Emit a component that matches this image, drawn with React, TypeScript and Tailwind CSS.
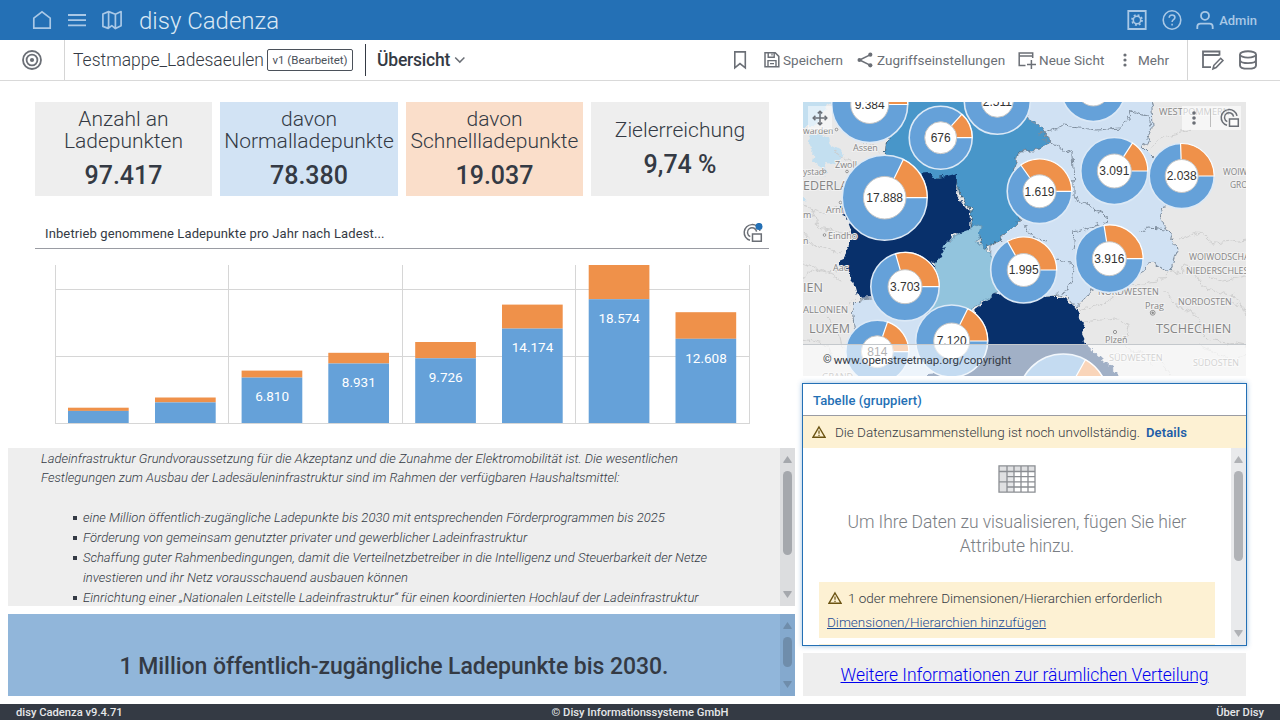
import type { ReactNode } from "react";

const BLUE = "#65a1d9";
const ORANGE = "#ef914a";

function HeaderIcons() {
  return (
    <div className="flex items-center text-[#a9c8e6]">
      <svg className="ml-8 h-5 w-5" viewBox="0 0 20 20" fill="none" stroke="currentColor" strokeWidth="1.7">
        <path d="M1.8 8.2 10 1.9l8.2 6.3v10H1.8z" />
      </svg>
      <svg className="ml-[15px] h-5 w-5" viewBox="0 0 20 20" fill="none" stroke="currentColor" strokeWidth="1.8">
        <path d="M1 5h18M1 10.2h18M1 15.4h18" />
      </svg>
      <svg className="ml-[15px] h-5 w-5" viewBox="0 0 20 20" fill="none" stroke="currentColor" strokeWidth="1.7" strokeLinejoin="round">
        <path d="M.9 4 6.6 1.6l6.8 2.6 5.7-2.6v14.2l-5.7 2.8L9.8 15.6 6.2 18.4.9 16.4zM6.6 1.8v13.6l-.4 3M13.4 4.2v14.2" />
      </svg>
      <span className="ml-[17px] pt-[2px] text-[24px] leading-none font-light text-[#dbe8f4]">disy Cadenza</span>
    </div>
  );
}

function Header() {
  return (
    <header className="flex h-10 shrink-0 items-center justify-between bg-[#2470b5] pr-[23px]">
      <HeaderIcons />
      <div className="flex items-center text-[#a9c8e6]">
        <svg className="h-5 w-5" viewBox="0 0 20 20" fill="none" stroke="currentColor" strokeWidth="1.8">
          <path d="M1.3 1h17.4v18H1.3z" />
          <circle cx="10" cy="10" r="3.7" strokeWidth="1.6" />
          <circle cx="10" cy="10" r="5" strokeWidth="1.8" strokeDasharray="1.9 2.03" />
        </svg>
        <svg className="ml-[15px] h-5 w-5" viewBox="0 0 20 20" fill="none" stroke="currentColor" strokeWidth="1.6">
          <ellipse cx="10" cy="10" rx="8.8" ry="9.2" />
          <path d="M7.2 7.8c0-3.8 5.7-3.4 5.7-.3 0 2.2-2.8 2.2-2.8 4.4M10.1 13.7v1.8" />
        </svg>
        <svg className="ml-[13px] h-5 w-5" viewBox="0 0 20 20" fill="none" stroke="currentColor" strokeWidth="1.8">
          <circle cx="10" cy="5.8" r="4" />
          <path d="M2.3 19v-2.2c0-2 1.3-3.1 3.2-3.1h9c1.9 0 3.2 1.1 3.2 3.1V19" />
        </svg>
        <span className="ml-[4px] pt-px text-[13px] font-medium">Admin</span>
      </div>
    </header>
  );
}

function Tool({ icon, label, className }: { icon: ReactNode; label: string; className: string }) {
  return (
    <div className={`flex items-center ${className}`}>
      {icon}
      <span className="text-[13.5px] tracking-[0.04px] whitespace-nowrap">{label}</span>
    </div>
  );
}

function Toolbar() {
  return (
    <div className="flex h-[41px] shrink-0 items-center border-b border-[#d9d9d9] bg-white text-[#6b6f76]">
      <div className="flex h-full w-[65px] items-center justify-center border-r border-[#d5d5d5]">
        <svg className="h-5 w-5" viewBox="0 0 20 20" fill="none" stroke="currentColor" strokeWidth="1.8">
          <circle cx="10" cy="10" r="9" />
          <circle cx="10" cy="10" r="5.4" />
          <circle cx="10" cy="10" r="2.1" fill="currentColor" stroke="none" />
        </svg>
      </div>
      <span className="ml-2 w-[190px] pt-px text-[17.5px] font-light text-[#343a44]">Testmappe_Ladesaeulen</span>
      <span className="ml-1 flex h-[22px] w-[86px] items-center justify-center rounded-[2px] border border-[#4b515a] pt-px text-[11.5px] font-[450] whitespace-nowrap text-[#4b515a]">
        v1 (Bearbeitet)
      </span>
      <div className="ml-3 h-8 w-px bg-[#343a44]" />
      <span className="ml-[11px] w-[74px] text-[17.5px] font-medium tracking-[-0.2px] text-[#343a44]">Übersicht</span>
      <svg className="ml-[3px] h-3 w-3" viewBox="0 0 12 12" fill="none" stroke="currentColor" strokeWidth="1.5">
        <path d="m1.2 3.5 4.6 4.6 4.6-4.6" />
      </svg>
      <div className="ml-auto flex h-full items-center">
        <svg className="h-5 w-5" viewBox="0 0 20 20" fill="none" stroke="currentColor" strokeWidth="1.6">
          <path d="M4.8 1.9h10.5v16L10 13.6l-5.2 4.3z" />
        </svg>
        <Tool
          className="ml-[13px] w-[81px]"
          label="Speichern"
          icon={
            <svg className="mr-[2px] h-[18px] w-[18px] shrink-0" viewBox="0 0 18 18" fill="none" stroke="currentColor" strokeWidth="1.5">
              <path d="M2 1.8h10.2L15.8 5.4V15.8H2z" />
              <path d="M5 15.6V9.6h8v6M5.2 2v4.2h6V2" strokeWidth="1.4" />
              <path d="M9 2.4v2.2M7 12.6h4" strokeWidth="1.2" />
            </svg>
          }
        />
        <Tool
          className="ml-[13px] w-[149px]"
          label="Zugriffseinstellungen"
          icon={
            <svg className="mr-1 h-4 w-4 shrink-0" viewBox="0 0 16 16" fill="none" stroke="currentColor" strokeWidth="1.6">
              <path d="M13.5 2.6 2.6 8l10.9 5.4" />
              <circle cx="13.3" cy="2.7" r="2.1" fill="currentColor" stroke="none" />
              <circle cx="2.4" cy="8" r="1.9" fill="currentColor" stroke="none" />
              <circle cx="13.3" cy="13.3" r="2.1" fill="currentColor" stroke="none" />
            </svg>
          }
        />
        <Tool
          className="ml-3 w-[86px]"
          label="Neue Sicht"
          icon={
            <svg className="mr-[3px] h-[18px] w-[18px] shrink-0" viewBox="0 0 18 18" fill="none" stroke="currentColor" strokeWidth="1.5">
              <path d="M14.7 7V2H1.2v12.6h6.3M1.2 5h13.5M13.4 9v9M9 13.4h9" />
            </svg>
          }
        />
        <Tool
          className="ml-[15px] w-[51px]"
          label="Mehr"
          icon={
            <svg className="mr-[6px] h-4 w-[13px] shrink-0" viewBox="0 0 13 16" fill="currentColor">
              <circle cx="6" cy="3" r="1.6" />
              <circle cx="6" cy="8" r="1.6" />
              <circle cx="6" cy="13" r="1.6" />
            </svg>
          }
        />
        <div className="ml-[17px] h-full w-px bg-[#d5d5d5]" />
        <svg className="ml-[13px] h-[22px] w-6" viewBox="0 0 24 22" fill="none" stroke="currentColor" strokeWidth="1.8">
          <path d="M18.5 6.5v-4H2v15.6h8M2 6h16.5" />
          <path d="m12 19.8.9-3.5 6.8-7 2.2 2.2-6.8 7z" strokeWidth="1.6" />
        </svg>
        <svg className="mr-[22px] ml-[13px] h-5 w-5" viewBox="0 0 20 20" fill="none" stroke="currentColor" strokeWidth="1.9">
          <ellipse cx="10" cy="4.4" rx="8" ry="3.2" />
          <path d="M2 4.4v11c0 4.3 16 4.3 16 0v-11M2 10c0 4.2 16 4.2 16 0" />
        </svg>
      </div>
    </div>
  );
}

function Kpi({ title, value, className }: { title: string[]; value: string; className: string }) {
  return (
    <div className={`flex h-[94px] flex-col items-center justify-center pt-[3px] text-[#343a44] ${className}`}>
      {title.map((line) => (
        <span key={line} className="text-[21px] leading-[22px] font-light whitespace-nowrap">
          {line}
        </span>
      ))}
      <span className="mt-[7px] text-[25px] leading-[34px] font-[550]">{value}</span>
    </div>
  );
}

const bars = [
  { x: 68, top: 407.7, mid: 410.9 },
  { x: 155, top: 397.5, mid: 402.4 },
  { x: 241.6, top: 370.6, mid: 377.6, label: "6.810", ly: 401 },
  { x: 328.3, top: 352.8, mid: 363.5, label: "8.931", ly: 387 },
  { x: 415.2, top: 342, mid: 358.3, label: "9.726", ly: 382 },
  { x: 502, top: 304.6, mid: 328.6, label: "14.174", ly: 352 },
  { x: 588.7, top: 265, mid: 299.2, label: "18.574", ly: 323 },
  { x: 675.5, top: 312.2, mid: 338.8, label: "12.608", ly: 363 },
];

function BarChart() {
  return (
    <svg className="block h-[175px] w-full" viewBox="35 249 734 175">
      <g stroke="#d6d6d6" shapeRendering="crispEdges">
        <path d="M55.5 265v159M228.5 265v159M402.5 265v159M575.5 265v159M749.5 265v159M55 289.5h695M55 356.5h695M55 423.5h695" />
      </g>
      {bars.map((b) => (
        <g key={b.x}>
          <rect x={b.x} y={b.top} width="60.7" height={b.mid - b.top} fill={ORANGE} />
          <rect x={b.x} y={b.mid} width="60.7" height={423 - b.mid} fill={BLUE} />
          {b.label && (
            <text x={b.x + 30.5} y={b.ly} textAnchor="middle" fill="#fff" className="text-[13.5px] font-[450]">
              {b.label}
            </text>
          )}
        </g>
      ))}
    </svg>
  );
}

function LinkedViewIcon({ dot }: { dot?: boolean }) {
  return (
    <svg className="h-5 w-5" viewBox="0 0 20 20" fill="none" stroke="#6b6f76" strokeWidth="1.5">
      <path d="M7 17.3A8 8 0 1 1 17 7.8" />
      <path d="M7.3 13.6A4.6 4.6 0 1 1 13.6 8.6" />
      <path d="M9.5 11h8.8v7.2H9.5z" fill="#ffffff" fillOpacity="0.7" />
      {dot && <circle cx="16" cy="3.4" r="3.5" fill="#2470b5" stroke="none" />}
    </svg>
  );
}

function Scrollbar({ track, thumb, arrow }: { track: string; thumb: string; arrow: string }) {
  return (
    <div className={`flex w-[15px] shrink-0 flex-col items-center pt-2 pb-2 ${track}`}>
      <svg className={`h-[7px] w-[9px] shrink-0 ${arrow}`} viewBox="0 0 9 7" fill="currentColor">
        <path d="M4.5 0 9 6.4 8 7H1L0 6.4z" />
      </svg>
      <div className={`mt-2 w-[9px] rounded-full ${thumb}`} />
      <svg className={`mt-auto h-[7px] w-[9px] shrink-0 ${arrow}`} viewBox="0 0 9 7" fill="currentColor">
        <path d="M4.5 7 9 .6 8 0H1L0 .6z" />
      </svg>
    </div>
  );
}

function Bullet({ children }: { children: ReactNode }) {
  return (
    <li className="flex">
      <span className="mt-[8px] mr-[6px] h-[4px] w-[4px] shrink-0 bg-[#343a44]" />
      <span className="flex flex-col">{children}</span>
    </li>
  );
}

function InfoText() {
  return (
    <section className="mt-6 flex h-[158px] shrink-0 overflow-hidden bg-[#eeeeee]">
      <div className="min-w-0 flex-1 pt-px pl-[33px] text-[13px] leading-5 font-light whitespace-nowrap text-[#343a44] italic">
        <div className="leading-[19px]">
          Ladeinfrastruktur Grundvoraussetzung für die Akzeptanz und die Zunahme der Elektromobilität ist. Die wesentlichen
        </div>
        <div className="leading-[19px]">
          Festlegungen zum Ausbau der Ladesäuleninfrastruktur sind im Rahmen der verfügbaren Haushaltsmittel:
        </div>
        <ul className="mt-[21px] pl-8">
          <Bullet>
            <span className="tracking-[0.02px]">
              eine Million öffentlich-zugängliche Ladepunkte bis 2030 mit entsprechenden Förderprogrammen bis 2025
            </span>
          </Bullet>
          <Bullet>Förderung von gemeinsam genutzter privater und gewerblicher Ladeinfrastruktur</Bullet>
          <Bullet>
            <span className="tracking-[-0.01px]">
              Schaffung guter Rahmenbedingungen, damit die Verteilnetzbetreiber in die Intelligenz und Steuerbarkeit der Netze
            </span>
            <span>investieren und ihr Netz vorausschauend ausbauen können</span>
          </Bullet>
          <Bullet>
            <span className="tracking-[0.03px]">
              Einrichtung einer „Nationalen Leitstelle Ladeinfrastruktur“ für einen koordinierten Hochlauf der Ladeinfrastruktur
            </span>
          </Bullet>
        </ul>
      </div>
      <Scrollbar track="bg-[#dcdddf]" thumb="h-[84px] bg-[#a5a8ad]" arrow="text-[#a5a8ad]" />
    </section>
  );
}

type Donut = { x: number; y: number; r: number; h: number; a: number; label: string };

const donuts: Donut[] = [
  { x: 869.7, y: 104.5, r: 38, h: 19, a: 62, label: "9.384" },
  { x: 997.3, y: 101.3, r: 33, h: 16, a: 60, label: "2.511" },
  { x: 1093.3, y: 89.5, r: 32, h: 16.5, a: 60, label: "" },
  { x: 940.7, y: 137.7, r: 31.5, h: 16, a: 48, label: "676" },
  { x: 884.7, y: 197.7, r: 42.5, h: 21.3, a: 64, label: "17.888" },
  { x: 1114.3, y: 171, r: 33.5, h: 17, a: 57, label: "3.091" },
  { x: 1181.7, y: 176, r: 32.5, h: 16.5, a: 92, label: "2.038" },
  { x: 1039.5, y: 191.3, r: 32.3, h: 16.5, a: 125.5, label: "1.619" },
  { x: 1109.3, y: 258.7, r: 33.8, h: 17, a: 99, label: "3.916" },
  { x: 1023.7, y: 270, r: 33, h: 16.5, a: 119.5, label: "1.995" },
  { x: 905, y: 286.7, r: 34.2, h: 17, a: 106, label: "3.703" },
  { x: 877.3, y: 351.7, r: 31.5, h: 16, a: 71, label: "814" },
  { x: 951.7, y: 341, r: 36, h: 18, a: 63.5, label: "7.120" },
  { x: 1063.3, y: 399, r: 45, h: 22, a: 60.6, label: "" },
];

function DonutMark({ d }: { d: Donut }) {
  const rad = (d.a * Math.PI) / 180;
  const ex = d.x + d.r * Math.cos(rad);
  const ey = d.y - d.r * Math.sin(rad);
  return (
    <g>
      <circle cx={d.x} cy={d.y} r={d.r} fill={BLUE} stroke="#dce9f6" strokeWidth="1.6" />
      <path
        d={`M${d.x} ${d.y}L${d.x + d.r} ${d.y}A${d.r} ${d.r} 0 0 0 ${ex} ${ey}Z`}
        fill={ORANGE}
        stroke="#fff"
        strokeWidth="1.2"
      />
      <circle cx={d.x} cy={d.y} r={d.h} fill="#fff" stroke="#c4c4c4" strokeWidth="1" />
      <text x={d.x} y={d.y + 4.2} textAnchor="middle" fill="#333" className="font-['Liberation_Sans',sans-serif] text-[12px]">
        {d.label}
      </text>
    </g>
  );
}

const places: { t: string; x: number; y: number; s: number }[] = [
  { t: "warden", x: 803, y: 133.5, s: 8.6 },
  { t: "Assen", x: 853, y: 151, s: 9 },
  { t: "Zwoll", x: 835, y: 168, s: 9 },
  { t: "ystad", x: 803, y: 175, s: 8.4 },
  { t: "EDERLA", x: 803, y: 190, s: 12.4 },
  { t: "Arnh", x: 826, y: 212.5, s: 9 },
  { t: "m", x: 803, y: 218, s: 9 },
  { t: "n", x: 803, y: 244, s: 9 },
  { t: "Eindho", x: 828, y: 239, s: 9 },
  { t: "Aac", x: 833, y: 271, s: 9 },
  { t: "IEN", x: 803, y: 292, s: 12.5 },
  { t: "ALLONIEN", x: 803, y: 313, s: 9.4 },
  { t: "LUXEM", x: 809, y: 333, s: 12.5 },
  { t: "GRAND", x: 822, y: 380, s: 9 },
  { t: "WESTPOMMERN", x: 1159, y: 115, s: 9.2 },
  { t: "WOIW", x: 1223, y: 174.5, s: 8.4 },
  { t: "GRO", x: 1230, y: 188, s: 8.4 },
  { t: "WOIWODSCHA", x: 1189, y: 260, s: 8.7 },
  { t: "NIEDERSCHLES", x: 1186, y: 273.5, s: 8.9 },
  { t: "NORDWESTEN", x: 1098, y: 294.5, s: 9 },
  { t: "NORDOSTEN", x: 1178, y: 304.5, s: 8.9 },
  { t: "Prag", x: 1145, y: 309, s: 9 },
  { t: "TSCHECHIEN", x: 1156, y: 333, s: 12.6 },
  { t: "Plzeň", x: 1105, y: 342.5, s: 9 },
  { t: "SÜDWESTEN", x: 1109, y: 361, s: 9.1 },
  { t: "SÜDOSTEN", x: 1193, y: 366, s: 8.9 },
];

function MapView() {
  return (
    <section className="relative h-[274px] shrink-0 overflow-hidden bg-[#e8e8e8]">
      <svg className="block h-full w-full" viewBox="803 102 443 274">
        <defs>
          <filter id="coast" x="-5%" y="-5%" width="110%" height="110%" colorInterpolationFilters="sRGB">
            <feTurbulence type="fractalNoise" baseFrequency="0.13" numOctaves="3" seed="4" />
            <feDisplacementMap in="SourceGraphic" scale="9" xChannelSelector="R" yChannelSelector="G" />
          </filter>
        </defs>
        <g filter="url(#coast)">
          <g fill="#c3dff0">
            <path d="M795 90h56l-8 12-16 4-8 14-6 8h-18z" />
            <path d="M808 136l12-2 8 3 2 8 14 8-8 10-10-1 2 10-4 6-6-14-6-2 2-14z" />
            <path d="M795 197l9-2 3 5-12 4z" />
          </g>
          <g fill="none" stroke="#cccccc" strokeWidth="0.9">
            <path d="M845 125l15 14 22 12M835 152l18 12 12 10M803 205l20 8 18-6M812 208l6 20 30 6M803 232l12 14 26 8M803 262l22 10 20-2M803 276l16-8 22 12M826 318l12 10 4 18 16 8M803 340l24 6 10 22M840 312l14-12" />
            <path d="M1150 150l10-12 30-8M1180 240l20-8 14 12 34-4M1168 268l12 6 4-10 20 6 14 12 28-6M1078 310l26-6 24-18 30-4 12-14M1085 322l30-4 14 8-4 20 30 18M1165 290l12 16 20 10 6 22 44 8M1196 276l10 12 30 8 10 20M1130 350l30 10 14 18M1200 345l30 14 16-4M1225 300l22 10" />
          </g>
          <path fill="#4896c9" stroke="#3d5c74" strokeWidth="0.9" d="M902 92 893 128 886 146 884 170 928 178 957 178 960 195 972 212 970 228 978 236 984 250 992 243 1004 236 1017 224 1020 210 1013 196 1014 168 1020 152 1040 150 1049 140 1042 128 1030 118 1022 92z" />
          <path fill="#d0e1f3" stroke="#7d8c9c" strokeWidth="1" d="M1015 92 1148 92 1152 108 1153 127 1143 148 1153 158 1165 190 1166 206 1160 214 1166 228 1176 242 1177 252 1172 268 1167 272 1153 262 1146 268 1120 284 1090 290 1077 308 1068 298 1060 294 1000 302 988 280 990 246 1004 236 1018 222 1024 208 1014 196 1014 168 1021 152 1040 150 1049 140 1042 128 1028 118z" />
          <path fill="#d0e1f3" stroke="#7d8c9c" strokeWidth="1" d="M852 308 860 300 884 298 930 308 950 320 940 390 862 390 856 342z" />
          <path fill="#92c4dd" stroke="#5f8fae" strokeWidth="0.8" d="M935 262 940 246 956 236 974 224 982 226 978 242 990 252 996 264 1000 290 988 298 972 308 974 322 930 324 926 290z" />
          <path fill="#08306b" d="M928 174 938 178 958 173 957 196 970 212 969 230 952 236 944 246 940 258 932 264 934 290 916 310 900 306 872 298 858 299 853 282 840 264 850 246 850 230 841 206 860 180z" />
          <path fill="#08306b" d="M976 308 994 294 1010 298 1040 296 1060 296 1072 305 1084 322 1082 334 1088 346 1103 360 1118 374 1122 390 926 390 928 374 950 372 984 350z" />
          <g fill="none" stroke="#7d8c9c" strokeWidth="1">
            <path d="M1040 134 1062 126 1080 128 1098 130 1120 128 1132 112 1148 116 1150 126M1042 138 1072 154 1074 184 1074 198 1090 206 1106 216 1108 222 1074 232 1072 250M1026 226 1032 236 1046 242M1055 260 1072 262 1074 276 1062 296M1140 232 1148 228 1166 230" />
          </g>
        </g>
        <g fill="#858585" stroke="#f1f1f1" strokeWidth="2" paintOrder="stroke" className="font-['Open_Sans',sans-serif]">
          {places.map((p) => (
            <text key={p.t} x={p.x} y={p.y} fontSize={p.s}>
              {p.t}
            </text>
          ))}
        </g>
        <g fill="#f2f2f2" stroke="#888" strokeWidth="0.9">
          <circle cx="836.5" cy="129.5" r="1.3" />
          <circle cx="824.5" cy="171.5" r="1.3" />
          <circle cx="847" cy="171.5" r="1.3" />
          <circle cx="840.5" cy="202.5" r="1.3" />
          <circle cx="824.5" cy="235" r="1.3" />
          <circle cx="1115" cy="332" r="1.6" />
          <circle cx="1152.7" cy="312.8" r="2.4" />
          <circle cx="1152.7" cy="312.8" r="0.9" fill="#888" />
        </g>
        {donuts.map((d) => (
          <DonutMark key={d.x} d={d} />
        ))}
      </svg>
      <div className="absolute top-1 left-[5px] flex h-6 w-6 items-center justify-center bg-white/50 text-[#6b6f76]">
        <svg className="h-4 w-4" viewBox="0 0 16 16" fill="none" stroke="currentColor" strokeWidth="1.5">
          <path d="M8 1.5v13M1.5 8h13" />
          <path d="M5.8 3.4 8 1.2l2.2 2.2M5.8 12.6 8 14.8l2.2-2.2M3.4 5.8 1.2 8l2.2 2.2M12.6 5.8 14.8 8l-2.2 2.2" />
        </svg>
      </div>
      <div className="absolute top-1 right-[5px] flex h-6 w-[59px] items-center bg-white/60 text-[#6b6f76]">
        <svg className="ml-[4px] h-4 w-4" viewBox="0 0 16 16" fill="currentColor">
          <circle cx="8" cy="3" r="1.8" />
          <circle cx="8" cy="8" r="1.8" />
          <circle cx="8" cy="13" r="1.8" />
        </svg>
        <div className="ml-2 h-[18px] w-px bg-[#bdbdbd]" />
        <div className="ml-[9px]">
          <LinkedViewIcon />
        </div>
      </div>
      <div className="absolute right-0 bottom-0 left-0 flex h-8 items-center border-t border-[#c4c8cc] bg-white/62 pl-5 text-[11.5px] text-[#343a44]">
        <span className="mr-[2px] text-[11px]">©</span>
        <span className="tracking-[-0.02px]">www.openstreetmap.org/copyright</span>
      </div>
    </section>
  );
}

function WarningIcon() {
  return (
    <svg className="h-[14px] w-[14px] shrink-0" viewBox="0 0 14 14" fill="none" stroke="#6b5312" strokeWidth="1.4">
      <path d="M7 2 13 12.2H1z" />
      <path d="M7 5.6v3.2M7 9.8v1.2" strokeWidth="1.2" />
    </svg>
  );
}

function TableIcon() {
  return (
    <svg className="h-7 w-[38px] shrink-0" viewBox="0 0 38 28" fill="none" stroke="#8b8e93" strokeWidth="1.3">
      <path d="M1 1h36v5.5H1zM1 6.5h8v20.5H1z" fill="#dfe0e2" stroke="none" />
      <path d="M9 6.5h7v20.5H9z" fill="#e6e7e9" stroke="none" />
      <path d="M1 .8h36v26.4H1zM1 6.5h36M9 11.7h28M1 16.9h36M9 22h28M9 1v26M16 1v26M23 1v26M30 1v26" />
    </svg>
  );
}

function TablePanel() {
  return (
    <section className="-mx-px mt-[7px] flex h-[263px] shrink-0 flex-col overflow-hidden border border-[#2470b5] bg-white shadow-[0_0_5px_rgba(36,112,181,0.45)]">
      <div className="flex h-8 shrink-0 items-center border-b border-[#9a9ca3] pt-[2px] pl-[10px] text-[13px] font-medium tracking-[0.07px] text-[#2470b5]">
        Tabelle (gruppiert)
      </div>
      <div className="flex h-8 shrink-0 items-center bg-[#fdf1d3] pl-[9px] text-[13.5px]">
        <WarningIcon />
        <span className="ml-[9px] w-[305px] font-light tracking-[-0.01px] whitespace-nowrap text-[#343a44]">
          Die Datenzusammenstellung ist noch unvollständig.
        </span>
        <span className="ml-[6px] pt-px text-[13px] font-semibold tracking-[0.1px] text-[#1f5ea8]">Details</span>
      </div>
      <div className="flex min-h-0 flex-1">
        <div className="flex flex-1 flex-col items-center overflow-hidden px-4 pt-[17px]">
          <TableIcon />
          <p className="mt-[17px] shrink-0 text-center text-[17.5px] leading-6 font-light tracking-[-0.08px] text-[#7a7e84]">
            Um Ihre Daten zu visualisieren, fügen Sie hier
            <br />
            Attribute hinzu.
          </p>
          <div className="mt-6 flex h-14 w-full shrink-0 flex-col bg-[#fdf1d3] pt-1 pl-2 text-[13.5px] leading-6 font-light">
            <div className="flex items-center text-[#343a44]">
              <span className="pl-px"><WarningIcon /></span>
              <span className="ml-[6px]">1 oder mehrere Dimensionen/Hierarchien erforderlich</span>
            </div>
            <a className="text-[#1f4e96] underline">Dimensionen/Hierarchien hinzufügen</a>
          </div>
          <div className="mt-[6px] h-4 w-full shrink-0 bg-[#fdf1d3]" />
        </div>
        <Scrollbar track="bg-[#e9eaec]" thumb="h-[90px] bg-[#b0b2b6]" arrow="text-[#b0b2b6]" />
      </div>
    </section>
  );
}

export default function App() {
  return (
    <div className="flex h-[720px] w-[1280px] flex-col overflow-hidden bg-white font-[Roboto,sans-serif]">
      <Header />
      <Toolbar />
      <main className="flex min-h-0 flex-1 gap-2 pt-[21px] pl-2">
        <div className="flex w-[787px] shrink-0 flex-col">
          <div className="flex gap-2 pr-[26px] pl-[27px]">
            <Kpi className="w-[177px] bg-[#eeeeee]" title={["Anzahl an", "Ladepunkten"]} value="97.417" />
            <Kpi className="w-[178px] bg-[#d2e3f4]" title={["davon", "Normalladepunkte"]} value="78.380" />
            <Kpi className="w-[177px] bg-[#fadeca]" title={["davon", "Schnellladepunkte"]} value="19.037" />
            <Kpi className="w-[178px] bg-[#eeeeee]" title={["Zielerreichung"]} value="9,74 %" />
          </div>
          <section className="mt-[22px] mr-[26px] ml-[27px] shrink-0">
            <div className="flex h-[31px] items-center justify-between border-b border-[#9a9ca3] pr-[6px] pl-[10px]">
              <h2 className="pt-px text-[13px] font-[450] tracking-[0.12px] text-[#343a44]">
                Inbetrieb genommene Ladepunkte pro Jahr nach Ladest...
              </h2>
              <LinkedViewIcon dot />
            </div>
            <BarChart />
          </section>
          <InfoText />
          <section className="mt-2 flex h-[82px] shrink-0 bg-[#91b6da]">
            <div className="flex flex-1 items-end justify-center pb-3 text-[23px] font-medium tracking-[-0.05px] text-[#343a44]">
              1 Million öffentlich-zugängliche Ladepunkte bis 2030.
            </div>
            <Scrollbar track="bg-[#84a9ce]" thumb="h-[30px] bg-[#6f8dab]" arrow="text-[#6f8dab]" />
          </section>
        </div>
        <div className="flex w-[443px] shrink-0 flex-col">
          <MapView />
          <TablePanel />
          <div className="mt-[7px] flex h-[43px] shrink-0 items-center justify-center bg-[#eeeeee] pt-[2px] text-[17.5px] font-light tracking-[-0.04px]">
            <a className="text-[#0000ee] underline">Weitere Informationen zur räumlichen Verteilung</a>
          </div>
        </div>
      </main>
      <footer className="grid h-4 shrink-0 grid-cols-3 items-center bg-[#343a44] px-4 pt-px text-[11.2px] leading-[15px] font-medium text-[#e6e7e9]">
        <span>disy Cadenza v9.4.71</span>
        <span className="text-center">© Disy Informationssysteme GmbH</span>
        <span className="text-right">Über Disy</span>
      </footer>
    </div>
  );
}
